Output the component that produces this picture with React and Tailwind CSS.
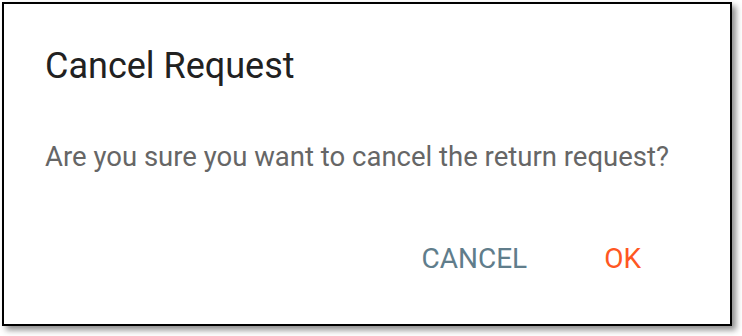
export default function App() {
  return (
    <div className="w-[742px] h-[336px] bg-white relative" style={{ fontFamily: "Roboto, 'Liberation Sans', sans-serif" }}>
      <div className="absolute left-[2px] top-[2px] w-[730px] h-[324px] border-2 border-black bg-white shadow-[4px_4px_6px_rgba(0,0,0,0.45)] flex flex-col">
        <div className="pl-[41px] pt-[38px] text-[36px] leading-[48px] text-[#212121]">Cancel Request</div>
        <div className="pl-[41px] pt-[51px] text-[27.5px] leading-[32px] text-[#666666]">Are you sure you want to cancel the return request?</div>
        <div className="flex justify-end items-center pr-[89px] pt-[70px] gap-[77px] text-[28px] leading-[32px] uppercase">
          <span className="text-[#607d8b]">Cancel</span>
          <span className="text-[#ff5722]">OK</span>
        </div>
      </div>
    </div>
  );
}
